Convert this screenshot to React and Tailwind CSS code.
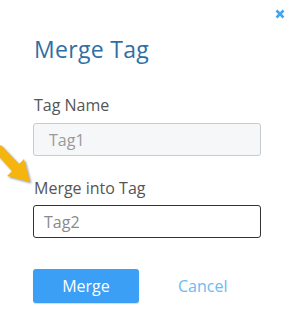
import React from "react";

export default function App() {
  return (
    <div
      className="relative w-[293px] h-[333px] bg-white overflow-hidden"
      style={{ fontFamily: '"Open Sans", "Liberation Sans", sans-serif' }}
    >
      {/* close icon */}
      <button className="absolute left-[274px] top-[8px] w-[11px] h-[11px] flex items-center justify-center">
        <svg width="10" height="10" viewBox="0 0 10 10">
          <path d="M1.5 1.5 L8.5 8.5 M8.5 1.5 L1.5 8.5" stroke="#3fa6ef" strokeWidth="2.6" strokeLinecap="butt" />
        </svg>
      </button>

      {/* arrow annotation */}
      <svg className="absolute left-0 top-[142px]" width="42" height="48" viewBox="0 0 42 48">
        <defs>
          <filter id="sh" x="-30%" y="-30%" width="160%" height="160%">
            <feGaussianBlur stdDeviation="1.2" />
          </filter>
        </defs>
        <g transform="translate(1.5,1.5)" filter="url(#sh)" opacity="0.55">
          <path d="M-6 9 L1 3 L19 22 L24 17 L30 40 L7 34 L12 29 Z" fill="#555" />
        </g>
        <path d="M-6 9 L1 3 L19 22 L24 17 L30 40 L7 34 L12 29 Z" fill="#f6b40e" />
      </svg>

      <div className="flex flex-col pl-[33px] pt-[34px] w-[261px]">
        <h1 className="text-[23px] leading-[30px] tracking-[0.3px] text-[#2f6fa5] font-normal ml-px">Merge Tag</h1>

        <label className="mt-[31px] text-[16px] leading-[20px] text-[#555555] ml-px">Tag Name</label>
        <div className="mt-[8px] h-[33px] w-[228px] rounded-[3px] border border-[#c5ccd6] bg-[#f6f7f8] flex items-center pl-[15px] text-[16px] text-[#9a9a9a]">
          Tag1
        </div>

        <label className="mt-[22px] text-[16px] leading-[20px] text-[#555555] ml-px">Merge into Tag</label>
        <div className="mt-[7px] h-[33px] w-[228px] rounded-[3px] border border-[#333333] bg-white flex items-center pl-[10px] text-[16px] text-[#8a8a8a]">
          Tag2
        </div>

        <div className="mt-[31px] flex items-center">
          <button className="w-[106px] h-[34px] rounded-[3px] bg-[#3a9ff5] text-white text-[16px] flex items-center justify-center shadow-[0_1px_1px_rgba(0,0,0,0.15)]">
            Merge
          </button>
          <span className="ml-[39px] text-[16px] text-[#6cbaf1]">Cancel</span>
        </div>
      </div>
    </div>
  );
}
